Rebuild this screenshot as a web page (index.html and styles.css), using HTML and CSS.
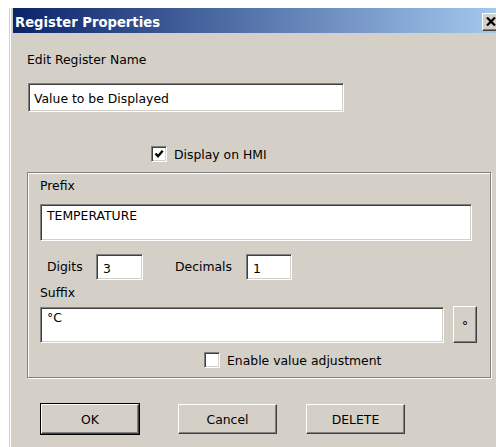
FILE: index.html
```html
<!DOCTYPE html>
<html lang="en">
<head>
<meta charset="utf-8">
<title>Register Properties</title>
<link rel="stylesheet" href="styles.css">
</head>
<body>
<div class="dialog">
  <div class="titlebar">
    <span class="title">Register Properties</span>
    <span class="close-btn">
      <svg width="10" height="9" viewBox="0 0 10 9"><path d="M1 0.5 L9 8.5 M9 0.5 L1 8.5" stroke="#000" stroke-width="2.2" fill="none"/></svg>
    </span>
  </div>
  <div class="content">
    <div class="label name-label">Edit Register Name</div>
    <div class="field name-field">Value to be Displayed</div>

    <div class="check hmi-check">
      <span class="box">
        <svg width="10" height="10" viewBox="0 0 10 10"><path d="M1.5 4.5 L4 7.2 L8.7 1.8" stroke="#000" stroke-width="2.4" fill="none"/></svg>
      </span>
      <span>Display on HMI</span>
    </div>

    <div class="group">
      <div class="label">Prefix</div>
      <div class="field prefix-field">TEMPERATURE</div>

      <div class="num-row">
        <span class="num-label digits-label">Digits</span>
        <div class="field num-field digits-field">3</div>
        <span class="num-label decimals-label">Decimals</span>
        <div class="field num-field decimals-field">1</div>
      </div>

      <div class="label suffix-label">Suffix</div>
      <div class="suffix-row">
        <div class="field suffix-field">°C</div>
        <div class="btn symbol-btn">°</div>
      </div>

      <div class="check adjust-check">
        <span class="box"></span>
        <span>Enable value adjustment</span>
      </div>
    </div>

    <div class="actions">
      <div class="btn default-btn">OK</div>
      <div class="btn cancel-btn">Cancel</div>
      <div class="btn delete-btn">DELETE</div>
    </div>
  </div>
</div>
</body>
</html>
```

FILE: styles.css
```css
html, body {
  margin: 0;
  background: #ffffff;
  overflow: hidden;
}

body {
  padding: 8px 0 0 9px;
  height: 447px;
  box-sizing: border-box;
  font-family: "DejaVu Sans", Verdana, sans-serif;
  font-size: 12.4px;
  color: #000;
}

/* window frame */
.dialog {
  width: 497px;
  height: 439px;
  box-sizing: border-box;
  background: #d4d0c8;
  border-left: 1px solid #d4d0c8;
  box-shadow: inset 1px 0 #ffffff;
  padding: 0 3px;
  display: flex;
  flex-direction: column;
}

.titlebar {
  height: 25px;
  flex: none;
  background: linear-gradient(to right, #0a246a, #a6caf0);
  display: flex;
  align-items: center;
  justify-content: space-between;
  padding: 0 3px 0 2px;
  color: #fff;
  font-weight: bold;
  font-size: 13.2px;
}

.title {
  padding-top: 3px;
}

.close-btn {
  width: 18px;
  height: 18px;
  margin-top: 2px;
  box-sizing: border-box;
  background: #d4d0c8;
  border: 1px solid;
  border-color: #fff #404040 #404040 #fff;
  box-shadow: inset -1px -1px #808080;
  display: flex;
  align-items: center;
  justify-content: center;
}

.content {
  padding: 19px 0 0 14px;
  display: flex;
  flex-direction: column;
  align-items: flex-start;
}

.label {
  line-height: 16px;
  height: 16px;
}

/* sunken edit boxes */
.field {
  box-sizing: border-box;
  background: #fff;
  border: 1px solid;
  border-color: #808080 #ffffff #ffffff #808080;
  box-shadow: inset 1px 1px #404040, inset -1px -1px #d4d0c8;
  padding: 3px 5px 0 6px;
  line-height: 16px;
  white-space: nowrap;
}

.name-field {
  margin: 15px 0 0 1px;
  width: 316px;
  height: 29px;
  padding-top: 7px;
  padding-left: 5px;
}

/* checkboxes */
.check {
  display: flex;
  align-items: center;
  line-height: 16px;
  height: 16px;
}

.check span:last-child {
  padding-top: 1px;
}

.box {
  width: 16px;
  height: 16px;
  box-sizing: border-box;
  background: #fff;
  border: 1px solid;
  border-color: #808080 #ffffff #ffffff #808080;
  box-shadow: inset 1px 1px #404040, inset -1px -1px #d4d0c8;
  display: flex;
  align-items: center;
  justify-content: center;
  margin-right: 7px;
}

.hmi-check {
  margin: 34px 0 0 124px;
}

/* etched group frame */
.group {
  margin-top: 10px;
  width: 464px;
  box-sizing: border-box;
  border: 1px solid #808080;
  box-shadow: inset 1px 1px #fff, 1px 1px #fff;
  padding: 4px 0 9px 12px;
  display: flex;
  flex-direction: column;
  align-items: flex-start;
}

.group > .label {
  padding-top: 1px;
  height: 15px;
}

.prefix-field {
  margin-top: 11px;
  width: 432px;
  height: 37px;
}

.num-row {
  margin-top: 13px;
  display: flex;
  align-items: center;
  height: 26px;
}

.num-label {
  line-height: 16px;
  margin-top: -1px;
}

.digits-label {
  width: 49px;
  margin-left: 7px;
}

.decimals-label {
  width: 71px;
  margin-left: 32px;
}

.num-field {
  height: 26px;
  padding-top: 6px;
}

.digits-field {
  width: 47px;
}

.decimals-field {
  width: 46px;
}

.suffix-label {
  margin-top: 4px;
}

.suffix-row {
  margin-top: 6px;
  display: flex;
  align-items: flex-start;
}

.suffix-field {
  margin-top: 1px;
  width: 404px;
  height: 36px;
  padding-top: 2px;
}

/* raised push buttons */
.btn {
  box-sizing: border-box;
  background: #d4d0c8;
  border: 1px solid;
  border-color: #ffffff #404040 #404040 #ffffff;
  box-shadow: inset -1px -1px #808080;
  display: flex;
  align-items: center;
  justify-content: center;
  line-height: 16px;
}

.symbol-btn {
  margin-left: 9px;
  width: 24px;
  height: 37px;
  font-size: 13px;
  padding-top: 2px;
}

.adjust-check {
  margin: 9px 0 0 164px;
}

.actions {
  margin: 26px 0 0 14px;
  display: flex;
}

.actions .btn {
  height: 30px;
  width: 99px;
  padding-top: 1px;
}

.actions .default-btn {
  width: 98px;
  box-shadow: inset -1px -1px #808080, 0 0 0 1px #000;
}

.cancel-btn {
  margin-left: 39px;
}

.delete-btn {
  margin-left: 29px;
}
```
